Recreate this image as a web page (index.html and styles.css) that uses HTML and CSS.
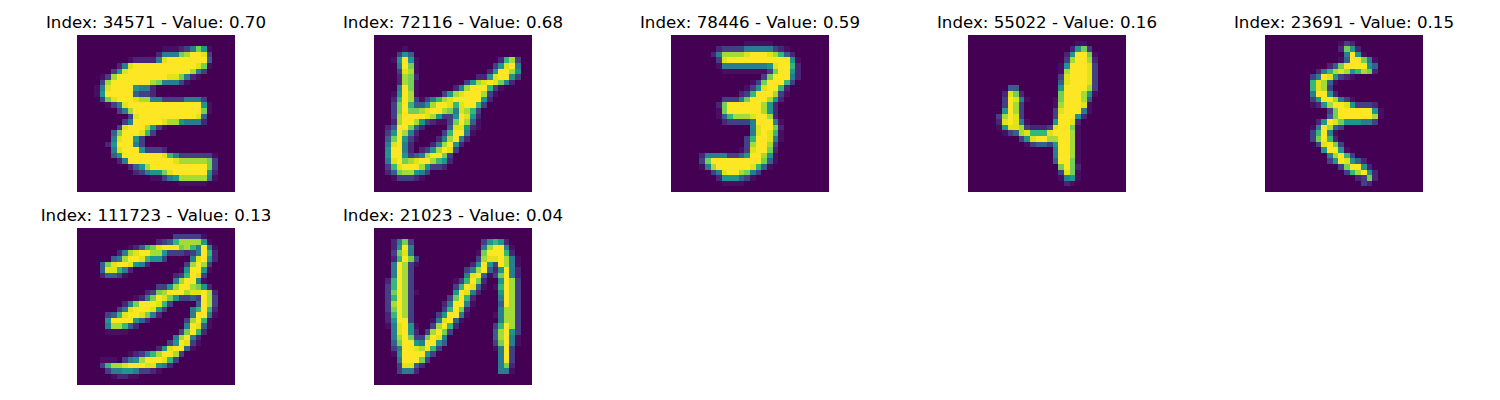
FILE: index.html
```html
<!DOCTYPE html>
<html lang="en">
<head>
<meta charset="utf-8">
<title>Top activations</title>
<link rel="stylesheet" href="styles.css">
</head>
<body>
<main class="figure">
  <figure class="panel"><figcaption class="panel-title">Index: 34571 - Value: 0.70</figcaption><canvas class="digit" width="28" height="28"></canvas></figure>
  <figure class="panel"><figcaption class="panel-title">Index: 72116 - Value: 0.68</figcaption><canvas class="digit" width="28" height="28"></canvas></figure>
  <figure class="panel"><figcaption class="panel-title">Index: 78446 - Value: 0.59</figcaption><canvas class="digit" width="28" height="28"></canvas></figure>
  <figure class="panel"><figcaption class="panel-title">Index: 55022 - Value: 0.16</figcaption><canvas class="digit" width="28" height="28"></canvas></figure>
  <figure class="panel"><figcaption class="panel-title">Index: 23691 - Value: 0.15</figcaption><canvas class="digit" width="28" height="28"></canvas></figure>
  <figure class="panel"><figcaption class="panel-title">Index: 111723 - Value: 0.13</figcaption><canvas class="digit" width="28" height="28"></canvas></figure>
  <figure class="panel"><figcaption class="panel-title">Index: 21023 - Value: 0.04</figcaption><canvas class="digit" width="28" height="28"></canvas></figure>
</main>
<script src="script.js"></script>
</body>
</html>
```
FILE: styles.css
```css
html, body {
  margin: 0;
  padding: 0;
  background: #ffffff;
}

.figure {
  display: grid;
  grid-template-columns: repeat(5, 297px);
  row-gap: 14px;
  padding: 13px 0 0 7.5px;
}

.panel {
  margin: 0;
  display: flex;
  flex-direction: column;
  align-items: center;
}

.panel-title {
  font-family: "DejaVu Sans", sans-serif;
  font-size: 16.67px;
  line-height: 19px;
  margin-bottom: 3px;
  color: #000000;
  white-space: nowrap;
}

.digit {
  display: block;
  width: 158px;
  height: 157px;
  image-rendering: pixelated;
  background: #440154;
}
```
FILE: script.js
```js
var PALETTE = {
  "0": "#440154", "1": "#470e61", "2": "#482576", "3": "#423f85", "4": "#35608d",
  "5": "#287d8e", "6": "#1f968b", "7": "#35b779", "8": "#73d055", "9": "#a5db36",
  "b": "#dfe318", "a": "#fde725"
};

// One entry per digit, 28 rows each. A row is a list of "startColumn levels" runs.
var DIGITS = [
[
"","",
"15 111235861",
"14 255589aab3",
"9 122225baaaaaaa4",
"7 25baaaaaaaaaaab81",
"6 36baaaaaaaaaaa953",
"4 139aaaaaaaaabb8521",
"4 39aaaaaaa9855531",
"3 15baaaa6552",
"3 16aaaaa4332",
"4 38baaab995533335553",
"5 135baaaaaaaaaaaaa61",
"7 359aaaaaaaaaaaa81",
"9 3baaaaaaaaaab4",
"8 35aaaaab9965552",
"7 3baaa9631",
"6 48aaab73",
"6 5baa63",
"5 26aaa53",
"6 5baaa63332",
"6 46aaaaaaab753333331",
"7 25aaaaaaaab9999983",
"9 2469aaaaaaaaaa83",
"10 235668baaaaaa62",
"13 113569999951",
"18 11111",
""
],
[
"","",
"5 1",
"4 364",
"3 16a61 22 2793",
"4 5a81 21 36ba5",
"4 3b91 20 26aa96",
"4 2982 18 226baa63",
"4 2981 16 369bab852",
"4 5a81 14 259aaa731",
"3 16a91 12 369baaa931",
"3 27a9313579baaaaa62",
"3 38a74469aab7baa73",
"3 38a889baa985b973",
"3 39aaaab96336ab62",
"3 29aa96321138a941",
"2 24aa842 13 4bb621",
"2 36a952 12 37aa51",
"2 48a631 11 259a52",
"2 5ba52 10 259a62",
"2 6aa52 8 2369ab3",
"2 6aa63459aa83",
"2 5ba89baa9762",
"2 37baaa96332",
"2 24899653",
"3 133321",
"",""
],
[
"",
"13 11111",
"8 2333355555321",
"7 259999baaab9742",
"8 3baaaaaaaaaaa61",
"8 1555555556baa72",
"9 1111111138aa62",
"16 38aaa52",
"14 138aaa73",
"13 136baa72",
"12 237aaa931",
"9 33358aaa962",
"8 28aaaaaa962",
"8 18aaaaaa962",
"8 147999baa92",
"9 233335aaa51",
"14 5baa82",
"14 5bab71",
"13 37aab51",
"13 39aa93",
"12 13baa82",
"5 255553346aa961",
"5 38aaaaaaaaa841",
"5 159aaaaaab741",
"7 35baa9853",
"8 2666431",
"9 1111",
""
],
[
"",
"19 11",
"18 2683",
"17 26aa81",
"17 39aa92",
"16 16aaab3",
"16 19aaab3",
"16 3baaab3",
"16 4baaab3",
"7 44 16 6aaaa93",
"6 2b82 16 8aaa961",
"6 3ab51 15 18aaa94",
"6 3a93 15 19aaab1",
"6 6a93 15 3baaa51",
"5 39ab3 15 3aaa62",
"5 2bab51 15 6aab2",
"5 16bb932223baa81",
"6 1349b777baaa91",
"9 36baa99aa91",
"10 134436aa91",
"15 5aa91",
"15 5aa91",
"15 4aa81",
"16 8a82",
"16 3b81",
"16 1561",
"17 21",
""
],
[
"",
"13 132",
"13 2862",
"14 5a61",
"13 14aa851",
"11 248aaaa64",
"9 2579b967982",
"8 35ab6321",
"8 7b941",
"8 7b93",
"8 5aa62",
"8 36aa9531",
"8 1269aab63332",
"11 38aaaaaa61",
"11 48aaaaaa91",
"9 26ab8666553",
"8 15a943",
"8 37a51",
"8 38a72",
"9 3ba83",
"10 6aa61",
"11 59a73",
"11 36ab642",
"13 38aa62",
"14 379a62",
"16 2382",
"17 32",
""
],
[
"",
"17 333331",
"14 2347999961",
"9 12478baaa8975a51",
"7 259baa996333235a72",
"6 459aab7663 20 5ba62",
"4 48baab652 19 39a93",
"4 4bb752 18 16aa61",
"4 24431 17 237ab3",
"17 59aa51",
"14 3369aa9862",
"12 2389aaa9bba92",
"10 1258ab863343a93",
"8 258aaab73 21 4a93",
"7 35baaab63 20 57a72",
"5 347baab852 20 5aa51",
"5 6aaaa642 19 39a71",
"5 599742 19 5ab41",
"5 1111 18 38a72",
"17 59a52",
"16 36ab31",
"14 26baa41",
"9 123579aa93",
"4 111 8 3569aaab73",
"4 3799baaabb652",
"5 3556653321",
"6 12211",
""
],
[
"","",
"3 2583 19 36762",
"3 26a5 19 59aa51",
"3 38b5 18 18aaa72",
"3 27a83 18 39bba951",
"3 5a931 17 26a63a951",
"3 5a93 16 359a426a52",
"3 5a93 16 5ba41 21 38a52",
"2 27a93 14 137a82 22 6a93",
"2 37a93 14 37ab41 21 17a93",
"2 38a931 14 6ab52 22 6a93",
"2 37a93 13 38a72 22 5a93",
"2 39a93 12 25aa51 22 4a93",
"2 38a93 12 37a82 22 5993",
"2 27a93 11 36aa51 21 15993",
"2 26aa3 10 15ba41 22 5993",
"2 15ba61 10 39a72 21 37a93",
"3 5ba62 9 39a83 21 49a63",
"3 59a8338ab5 21 49a51",
"3 48aa65aa64 21 38a51",
"3 35aab9a73 21 15a3",
"3 16aaaa63 22 5a3",
"4 5aaa83 22 5a3",
"4 3bb42 22 582",
"4 3552 22 551",
"",""
]
];

function paint(canvas, rows) {
  var ctx = canvas.getContext("2d");
  ctx.fillStyle = PALETTE["0"];
  ctx.fillRect(0, 0, 28, 28);
  rows.forEach(function (row, y) {
    var parts = row.split(" ").filter(Boolean);
    for (var i = 0; i + 1 < parts.length; i += 2) {
      var start = parseInt(parts[i], 10);
      var levels = parts[i + 1];
      for (var k = 0; k < levels.length; k++) {
        ctx.fillStyle = PALETTE[levels[k]] || PALETTE["0"];
        ctx.fillRect(start + k, y, 1, 1);
      }
    }
  });
}

var canvases = document.querySelectorAll(".digit");
DIGITS.forEach(function (rows, i) {
  paint(canvases[i], rows);
});
```
